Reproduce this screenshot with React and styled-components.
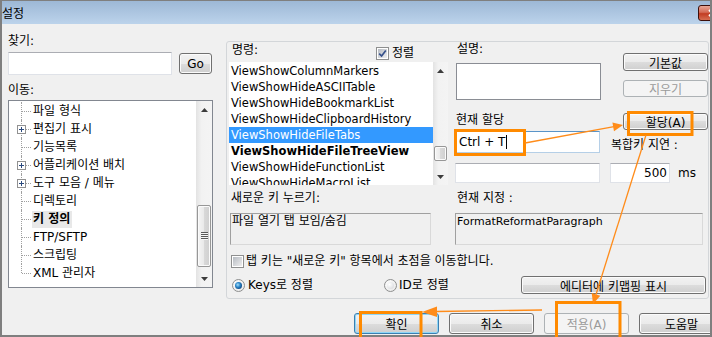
import React from 'react';
import styled, { createGlobalStyle, css } from 'styled-components';

const GlobalStyle = createGlobalStyle`
  html, body {
    margin: 0;
    padding: 0;
    background: #fff;
  }
  body {
    font-family: "DejaVu Sans", "Noto Sans CJK KR", sans-serif;
    font-size: 12px;
    color: #000;
  }
  * {
    box-sizing: border-box;
  }
`;

const Stage = styled.div`
  position: relative;
  width: 712px;
  height: 337px;
  overflow: hidden;
`;

const Window = styled.div`
  width: 712px;
  height: 337px;
  display: flex;
  flex-direction: column;
  background: #f0f0f0;
  border: 2px solid #7f7f7f;
  border-top-width: 1px;
  overflow: hidden;
`;

const TitleBar = styled.div`
  height: 23px;
  flex-shrink: 0;
  display: flex;
  align-items: flex-start;
  background: linear-gradient(#9db8d6, #bcd3eb);
`;

const TitleText = styled.span`
  margin-top: 6px;
  line-height: 14px;
`;

const CloseButton = styled.div`
  margin-left: auto;
  margin-top: 4px;
  margin-right: -31px;
  width: 43px;
  height: 16px;
  flex-shrink: 0;
  display: flex;
  align-items: center;
  padding-left: 9px;
  border: 1px solid #3d0f0a;
  border-radius: 3px;
  background: linear-gradient(#e8a898, #d46a55 45%, #c23c22 55%, #d66e52);
`;

const Body = styled.div`
  display: flex;
  align-items: flex-start;
  padding-left: 6px;
`;

const SidePane = styled.div`
  width: 205px;
  margin-top: 10px;
  display: flex;
  flex-direction: column;
`;

const FieldLabel = styled.div`
  line-height: 14px;
  height: 14px;
  white-space: nowrap;
  margin-top: ${p => p.$mt || 0}px;
  padding-left: ${p => p.$pl || 0}px;
`;

const SearchRow = styled.div`
  display: flex;
  align-items: center;
  gap: 7px;
  margin-top: 4px;
`;

const TextBox = styled.div`
  width: ${p => p.$w}px;
  height: ${p => p.$h}px;
  flex-shrink: 0;
  display: flex;
  align-items: center;
  justify-content: ${p => (p.$right ? 'flex-end' : 'flex-start')};
  padding: 0 ${p => (p.$right ? 2 : 3)}px;
  margin-top: ${p => p.$mt || 0}px;
  background: #fff;
  border: 1px solid #dfe2e8;
  border-top-color: #abadb3;
  white-space: nowrap;
  ${p =>
    p.$focused &&
    css`
      border-color: #b5cfe7;
      border-top-color: #5a94c8;
    `}
`;

const Caret = styled.span`
  width: 1px;
  height: 14px;
  margin-left: 1px;
  background: #000;
`;

const PushButton = styled.button`
  width: ${p => p.$w || 85}px;
  height: ${p => p.$h || 21}px;
  flex-shrink: 0;
  align-self: ${p => p.$align || 'auto'};
  margin: ${p => p.$mt || 0}px ${p => p.$mr || 0}px 0 ${p => (p.$push ? 'auto' : '0')};
  padding: 0;
  display: flex;
  align-items: center;
  justify-content: center;
  font: inherit;
  color: #000;
  border: 1px solid #707070;
  border-radius: 3px;
  background: linear-gradient(#f2f2f2, #ebebeb 50%, #dddddd 50%, #cfcfcf);
  box-shadow: inset 0 0 0 1px #fbfbfb;
  ${p =>
    p.$default &&
    css`
      border-color: #3c7fb1;
      box-shadow: inset 0 0 0 1px #8fd6f6;
    `}
  &:disabled {
    color: #9a9a9a;
    border-color: #adb2b5;
    background: #f4f4f4;
    box-shadow: none;
  }
`;

/* ---- tree ---- */

const TreeBox = styled.div`
  margin-top: 3px;
  height: 188px;
  display: flex;
  background: #fff;
  border: 1px solid #828790;
`;

const TreeBody = styled.div`
  flex: 1;
  padding-top: 1px;
`;

const TreeRow = styled.div`
  height: 18px;
  display: flex;
  align-items: center;
`;

const Branch = styled.div`
  position: relative;
  width: 23px;
  align-self: stretch;
  flex-shrink: 0;

  &::before {
    content: '';
    position: absolute;
    left: 12px;
    top: 0;
    bottom: ${p => (p.$last ? '50%' : '0')};
    border-left: 1px dotted #a0a0a0;
  }
  &::after {
    content: '';
    position: absolute;
    left: 13px;
    top: 9px;
    width: 9px;
    border-top: 1px dotted #a0a0a0;
  }
`;

const Expander = styled.svg`
  position: absolute;
  left: 8px;
  top: 5px;
  z-index: 1;
`;

const TreeLabel = styled.span`
  height: 17px;
  line-height: 17px;
  padding: 0 2px 0 1px;
  white-space: nowrap;
  ${p =>
    p.$selected &&
    css`
      font-weight: bold;
      background: #e8e8e8;
    `}
`;

/* ---- scrollbar ---- */

const ScrollTrack = styled.div`
  width: ${p => p.$w}px;
  flex-shrink: 0;
  display: flex;
  flex-direction: column;
  background: linear-gradient(to right, #e3e3e3, #f2f2f2 35%, #f4f4f4);
`;

const ScrollArrow = styled.div`
  height: 17px;
  flex-shrink: 0;
  display: flex;
  align-items: center;
  justify-content: center;
`;

const ScrollChannel = styled.div`
  flex: 1;
  padding: ${p => p.$top}px 1px 0;
`;

const Thumb = styled.div`
  height: ${p => p.$h}px;
  display: flex;
  align-items: center;
  justify-content: center;
  border: 1px solid #979797;
  border-radius: 2px;
  background: linear-gradient(to right, #f5f5f5, #e9e9e9 50%, #d9d9d9 50%, #cfcfcf);
  box-shadow: inset 0 0 0 1px #fbfbfb;
`;

const Grip = styled.div`
  width: 7px;
  height: 8px;
  background: repeating-linear-gradient(#5a5a5a 0 1px, #f6f6f6 1px 2px);
`;

const ScrollBar = ({ width, top, thumb, grip }) => (
  <ScrollTrack $w={width}>
    <ScrollArrow>
      <svg width="7" height="4" viewBox="0 0 7 4">
        <path d="M0 4 L3.5 0 L7 4 Z" fill="#3c3c3c" />
      </svg>
    </ScrollArrow>
    <ScrollChannel $top={top}>
      <Thumb $h={thumb}>{grip && <Grip />}</Thumb>
    </ScrollChannel>
    <ScrollArrow>
      <svg width="7" height="4" viewBox="0 0 7 4">
        <path d="M0 0 L3.5 4 L7 0 Z" fill="#3c3c3c" />
      </svg>
    </ScrollArrow>
  </ScrollTrack>
);

/* ---- keys panel ---- */

const Panel = styled.div`
  width: 483px;
  height: 258px;
  margin: 17px 0 0 13px;
  padding-left: 2px;
  display: flex;
  flex-direction: column;
  border: 1px solid #d3d6d9;
  border-radius: 3px;
`;

const TopRow = styled.div`
  display: flex;
`;

const CommandCol = styled.div`
  width: 219px;
  display: flex;
  flex-direction: column;
`;

const CommandHeader = styled.div`
  height: 20px;
  display: flex;
  justify-content: space-between;
  align-items: flex-start;
  padding: 0 34px 0 3px;
`;

const CheckLabel = styled.label`
  display: flex;
  align-items: center;
  gap: ${p => p.$gap || 3}px;
  margin-top: ${p => p.$mt || 0}px;
  padding-left: ${p => p.$pl || 0}px;
  line-height: 14px;
  white-space: nowrap;
`;

const CheckFrame = styled.span`
  width: 13px;
  height: 13px;
  flex-shrink: 0;
  display: flex;
  padding: 1px;
  background: #fff;
  border: 1px solid #8e8f8f;
`;

const CheckInner = styled.span`
  flex: 1;
  display: flex;
  background: linear-gradient(135deg, #b6bbc2, #eeeeef);
`;

const Checkbox = ({ checked }) => (
  <CheckFrame>
    <CheckInner>
      {checked && (
        <svg width="9" height="9" viewBox="0 0 9 9">
          <path d="M1.2 4.6 L3.6 7 L7.8 1.6" fill="none" stroke="#35508a" strokeWidth="1.7" />
        </svg>
      )}
    </CheckInner>
  </CheckFrame>
);

const RadioFrame = styled.span`
  width: 13px;
  height: 13px;
  flex-shrink: 0;
  display: flex;
  padding: 2px;
  border-radius: 50%;
  border: 1px solid #8e8f8f;
  background: radial-gradient(circle at 35% 35%, #ffffff, #e4e4e4);
`;

const RadioDot = styled.span`
  flex: 1;
  border-radius: 50%;
  background: ${p =>
    p.$on
      ? 'radial-gradient(circle at 40% 40%, #a8e0fb 0, #2b86c8 40%, #0d3f7a 80%)'
      : 'radial-gradient(circle at 35% 35%, #ffffff, #d2d4d8)'};
`;

const Radio = ({ on }) => (
  <RadioFrame>
    <RadioDot $on={on} />
  </RadioFrame>
);

const CommandList = styled.div`
  height: 123px;
  display: flex;
  background: #fff;
`;

const ListRows = styled.div`
  flex: 1;
  overflow: hidden;
  padding-top: 1px;
`;

const ListRow = styled.div`
  height: 16px;
  line-height: 16px;
  padding-left: 2px;
  font-size: 11.5px;
  white-space: nowrap;
  font-weight: ${p => (p.$bold ? 'bold' : 'normal')};
  ${p =>
    p.$selected &&
    css`
      background: #3399ff;
      color: #fff;
    `}
`;

const RightTop = styled.div`
  display: flex;
  margin-left: 7px;
`;

const DescCol = styled.div`
  width: 146px;
  display: flex;
  flex-direction: column;
`;

const DescBox = styled.div`
  width: 145px;
  height: 37px;
  margin: 7px 0 0 1px;
  background: #fff;
  border: 1px solid #8a8d94;
`;

const ActionCol = styled.div`
  width: 98px;
  margin-left: 9px;
  display: flex;
  flex-direction: column;
`;

const DelayRow = styled.div`
  display: flex;
  align-items: center;
  gap: 8px;
  margin-top: 11px;
`;

const MidRow = styled.div`
  display: flex;
  margin-top: 6px;
`;

const InfoCol = styled.div`
  width: ${p => p.$w}px;
  margin-left: ${p => p.$ml || 0}px;
  display: flex;
  flex-direction: column;
`;

const ReadBox = styled.div`
  width: ${p => p.$w}px;
  height: 32px;
  margin: 8px 0 0 ${p => p.$ml || 0}px;
  padding: 1px 0 0 1px;
  line-height: 13px;
  font-size: ${p => p.$fs || 12}px;
  white-space: nowrap;
  border: 1px solid #a0a0a0;
  border-right-color: #d9d9d9;
  border-bottom-color: #d9d9d9;
`;

const OptionRow = styled.div`
  height: 18px;
  margin-top: 8px;
  display: flex;
  align-items: center;
`;

const RadioOption = styled(CheckLabel)`
  width: ${p => p.$w || 'auto'}px;
`;

const ButtonBar = styled.div`
  display: flex;
  justify-content: flex-end;
  gap: 10px;
  margin: 14px -14px 0 0;
`;

/* ---- annotation overlay ---- */

const Overlay = styled.svg`
  position: absolute;
  left: 0;
  top: 0;
  pointer-events: none;
`;

const Annotations = () => (
  <Overlay width="712" height="337" viewBox="0 0 712 337">
    <g fill="none" stroke="#ff8a00" strokeWidth="3">
      <rect x="455.5" y="130.5" width="69" height="24" />
      <rect x="628.5" y="112.5" width="63.5" height="22" />
      <rect x="360.5" y="312.5" width="60.5" height="30" />
      <rect x="556.5" y="302.5" width="63.5" height="40" />
    </g>
    <g stroke="#ff8c1a" strokeWidth="1.3">
      <line x1="525" y1="143" x2="614" y2="126.7" />
      <line x1="646" y1="135" x2="596" y2="294.5" />
      <line x1="542" y1="310" x2="436" y2="311.5" />
    </g>
    <g fill="#ff8c1a">
      <polygon points="623,125 614,131.2 612.4,122.4" />
      <polygon points="593,304 600.3,295.8 591.7,293.1" />
      <polygon points="422,312 437,306.5 437,317" />
    </g>
  </Overlay>
);

const treeItems = [
  { label: '파일 형식' },
  { label: '편집기 표시', expandable: true },
  { label: '기능목록' },
  { label: '어플리케이션 배치', expandable: true },
  { label: '도구 모음 / 메뉴', expandable: true },
  { label: '디렉토리' },
  { label: '키 정의', selected: true },
  { label: 'FTP/SFTP' },
  { label: '스크립팅' },
  { label: 'XML 관리자', last: true },
];

const commands = [
  { name: 'ViewShowColumnMarkers' },
  { name: 'ViewShowHideASCIITable' },
  { name: 'ViewShowHideBookmarkList' },
  { name: 'ViewShowHideClipboardHistory' },
  { name: 'ViewShowHideFileTabs', selected: true },
  { name: 'ViewShowHideFileTreeView', bold: true },
  { name: 'ViewShowHideFunctionList' },
  { name: 'ViewShowHideMacroList' },
];

const App = () => {
  return (
    <Stage>
      <GlobalStyle />
      <Window>
        <TitleBar>
          <TitleText>설정</TitleText>
          <CloseButton>
            <svg width="9" height="8" viewBox="0 0 9 8">
              <path d="M1 1 L8 7 M8 1 L1 7" stroke="#fff" strokeWidth="2" />
            </svg>
          </CloseButton>
        </TitleBar>

        <Body>
          <SidePane>
            <FieldLabel>찾기:</FieldLabel>
            <SearchRow>
              <TextBox $w={164} $h={23} />
              <PushButton $w={33} $h={21}>Go</PushButton>
            </SearchRow>
            <FieldLabel $mt={8}>이동:</FieldLabel>
            <TreeBox>
              <TreeBody>
                {treeItems.map(item => (
                  <TreeRow key={item.label}>
                    <Branch $last={item.last}>
                      {item.expandable && (
                        <Expander width="9" height="9" viewBox="0 0 9 9">
                          <rect x="0.5" y="0.5" width="8" height="8" fill="#fff" stroke="#919191" />
                          <path d="M2 4.5 H7 M4.5 2 V7" stroke="#2b4a7e" strokeWidth="1" />
                        </Expander>
                      )}
                    </Branch>
                    <TreeLabel $selected={item.selected}>{item.label}</TreeLabel>
                  </TreeRow>
                ))}
              </TreeBody>
              <ScrollBar width={16} top={87} thumb={62} grip />
            </TreeBox>
          </SidePane>

          <Panel>
            <TopRow>
              <CommandCol>
                <CommandHeader>
                  <FieldLabel $mt={1}>명령:</FieldLabel>
                  <CheckLabel $mt={4}>
                    <Checkbox checked />
                    정렬
                  </CheckLabel>
                </CommandHeader>
                <CommandList>
                  <ListRows>
                    {commands.map(c => (
                      <ListRow key={c.name} $selected={c.selected} $bold={c.bold}>
                        {c.name}
                      </ListRow>
                    ))}
                  </ListRows>
                  <ScrollBar width={15} top={67} thumb={15} />
                </CommandList>
              </CommandCol>

              <RightTop>
                <DescCol>
                  <FieldLabel $pl={2}>설명:</FieldLabel>
                  <DescBox />
                  <FieldLabel $mt={13} $pl={1}>현재 할당</FieldLabel>
                  <TextBox $w={145} $h={22} $mt={4} $focused>
                    Ctrl + T<Caret />
                  </TextBox>
                  <TextBox $w={145} $h={20} $mt={10} />
                </DescCol>

                <ActionCol>
                  <PushButton $h={18} $mt={11} $align="flex-end">기본값</PushButton>
                  <PushButton $h={17} $mt={9} $align="flex-end" disabled>지우기</PushButton>
                  <PushButton $h={17} $mt={16} $align="flex-end">할당(A)</PushButton>
                  <FieldLabel $mt={8} $pl={1}>복합키 지연 :</FieldLabel>
                  <DelayRow>
                    <TextBox $w={60} $h={20} $right>500</TextBox>
                    ms
                  </DelayRow>
                </ActionCol>
              </RightTop>
            </TopRow>

            <MidRow>
              <InfoCol $w={219}>
                <FieldLabel $pl={2}>새로운 키 누르기:</FieldLabel>
                <ReadBox $w={201} $ml={1}>파일 열기 탭 보임/숨김</ReadBox>
              </InfoCol>
              <InfoCol $w={250} $ml={7}>
                <FieldLabel $pl={2}>현재 지정 :</FieldLabel>
                <ReadBox $w={248} $fs={11}>FormatReformatParagraph</ReadBox>
              </InfoCol>
            </MidRow>

            <CheckLabel $mt={9} $pl={2} $gap={2}>
              <Checkbox />
              탭 키는 "새로운 키" 항목에서 초점을 이동합니다.
            </CheckLabel>

            <OptionRow>
              <RadioOption $w={155} $pl={3}>
                <Radio on />
                Keys로 정렬
              </RadioOption>
              <RadioOption $gap={2}>
                <Radio />
                ID로 정렬
              </RadioOption>
              <PushButton $w={185} $h={18} $push $mr={2}>
                에디터에 키맵핑 표시
              </PushButton>
            </OptionRow>
          </Panel>
        </Body>

        <ButtonBar>
          <PushButton $default>확인</PushButton>
          <PushButton>취소</PushButton>
          <PushButton disabled>적용(A)</PushButton>
          <PushButton>도움말</PushButton>
        </ButtonBar>
      </Window>
      <Annotations />
    </Stage>
  );
};

export default App;
